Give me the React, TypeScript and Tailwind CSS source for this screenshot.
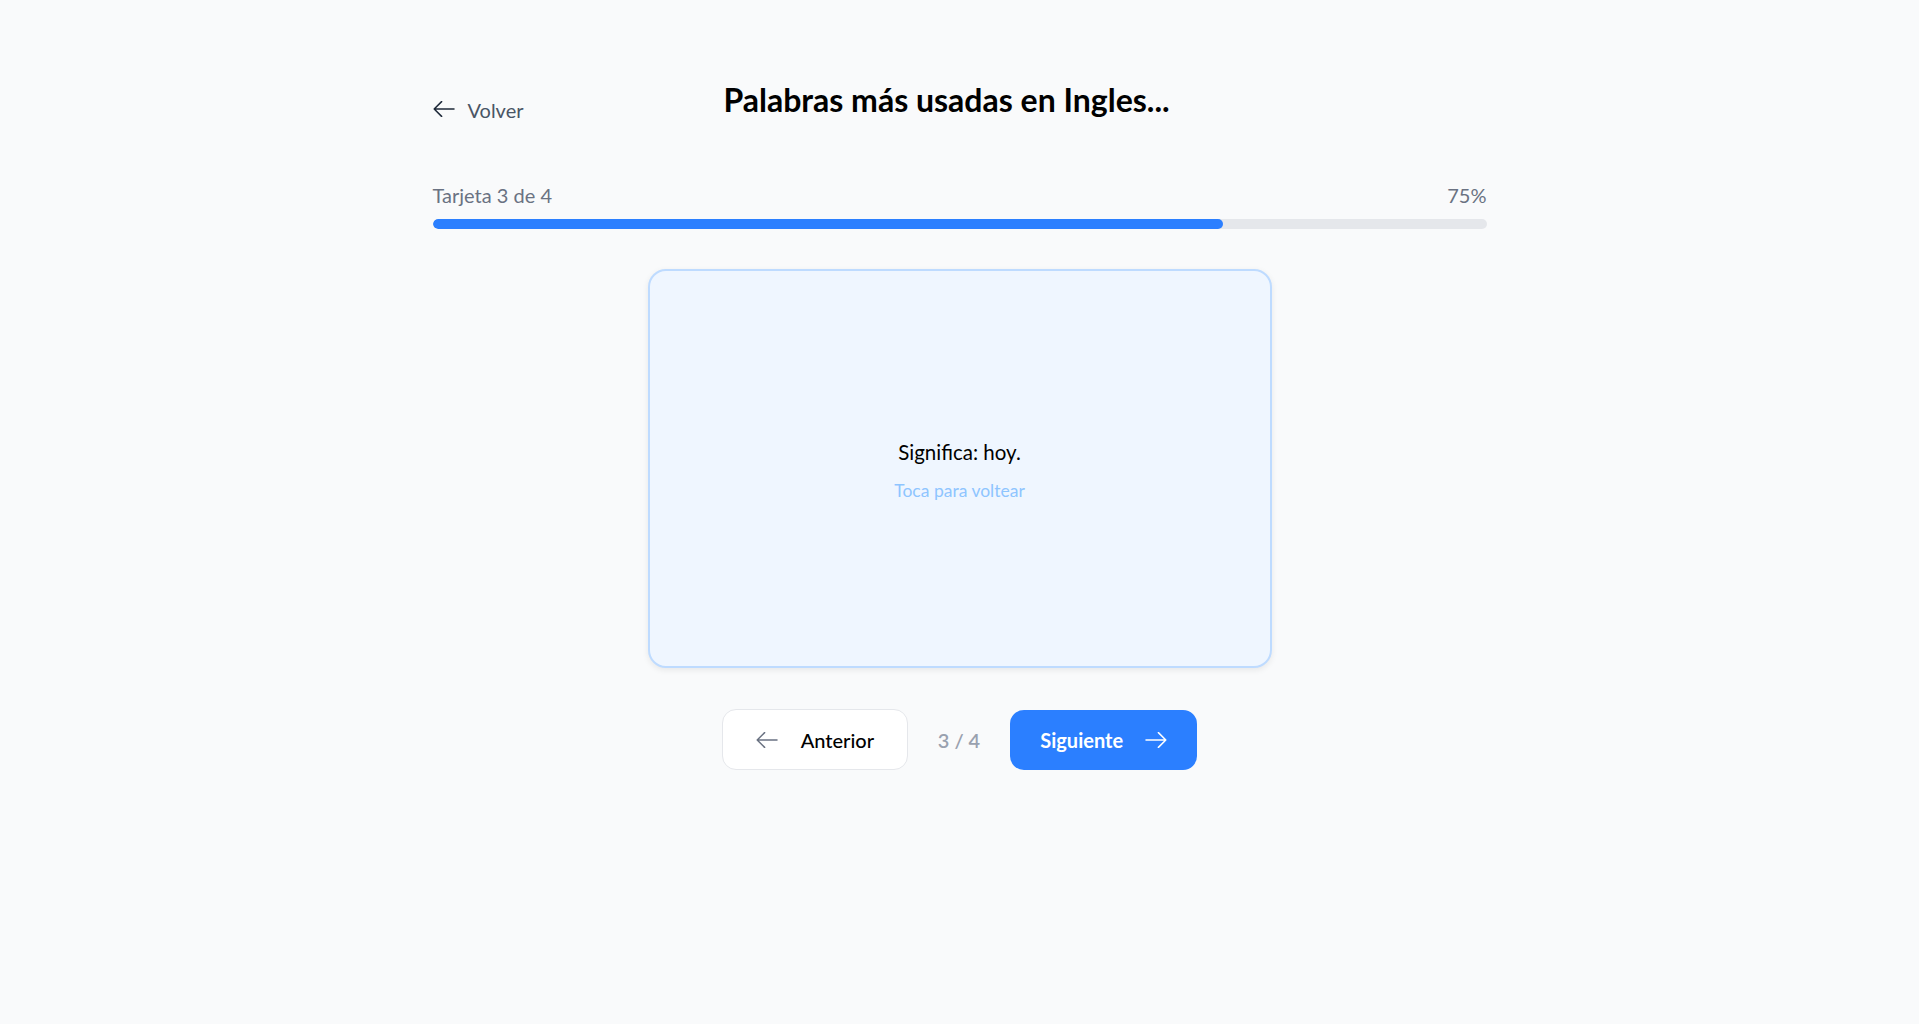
import { useState } from 'react';

function Arrow({ dir = 'left', className = '' }: { dir?: 'left' | 'right'; className?: string }) {
  return (
    <svg
      width="22"
      height="16"
      viewBox="0 0 22 16"
      fill="none"
      stroke="currentColor"
      strokeWidth="1.5"
      strokeLinecap="round"
      strokeLinejoin="round"
      className={className}
      style={dir === 'right' ? { transform: 'scaleX(-1)' } : undefined}
    >
      <path d="M21 8H1.2M8.6 0.6 1.2 8l7.4 7.4" />
    </svg>
  );
}

const cards = [
  { front: 'Today', back: 'Significa: hoy.' },
  { front: 'Time', back: 'Significa: tiempo.' },
  { front: 'Today', back: 'Significa: hoy.' },
  { front: 'Year', back: 'Significa: año.' },
];

export default function App() {
  const [index] = useState(2);
  const total = 4;
  const pct = Math.round(((index + 1) / total) * 100);

  return (
    <div className="min-h-screen bg-[#f9fafb] font-['Lato','Noto_Sans',sans-serif] text-[#101828]">
      <div className="mx-auto w-[1054px] pt-[80px]">
        {/* header */}
        <div className="flex items-start">
          <button className="mt-[16px] flex items-center gap-[13px] text-[20px] leading-[28px] text-[#4a5565]">
            <Arrow className="text-[#1e2939] -mt-[3px]" />
            <span>Volver</span>
          </button>
          <h1 className="flex-1 text-center text-[32px] leading-[40px] font-bold text-black">
            Palabras más usadas en Ingles...
          </h1>
          <div className="w-[117px]" />
        </div>

        {/* progress */}
        <div className="mt-[57px] flex items-center justify-between text-[20px] leading-[28px] text-[#6a7282]">
          <span>Tarjeta {index + 1} de {total}</span>
          <span>{pct}%</span>
        </div>
        <div className="mt-[10px] h-[10px] w-full overflow-hidden rounded-full bg-[#e5e7eb]">
          <div className="h-full rounded-full bg-[#2b7fff]" style={{ width: `${pct}%` }} />
        </div>

        {/* card */}
        <div className="mx-auto mt-[40px] flex h-[399px] w-[624px] cursor-pointer flex-col items-center justify-center rounded-[18px] border-2 border-[#bedbff] bg-[#eff6ff] pt-[4px] shadow-[0_2px_6px_rgba(0,0,0,0.08)]">
          <p className="text-[20.5px] leading-[28px] text-black">{cards[index].back}</p>
          <p className="mt-[12px] text-[17.5px] leading-[25px] text-[#8ec5ff]">Toca para voltear</p>
        </div>

        {/* navigation */}
        <div className="mt-[41px] flex items-center justify-center gap-[30px]">
          <button className="flex h-[61px] w-[186px] items-center justify-center gap-[23px] rounded-[14px] border border-[#e5e7eb] bg-white text-[20px] font-medium text-black">
            <Arrow className="text-[#6a7282]" />
            <span>Anterior</span>
          </button>
          <span className="text-[20px] font-semibold text-[#99a1af]">
            {index + 1} / {total}
          </span>
          <button className="flex h-[60px] w-[187px] items-center justify-center gap-[22px] rounded-[14px] bg-[#2b7fff] text-[20px] font-bold text-white">
            <span>Siguiente</span>
            <Arrow dir="right" className="text-white" />
          </button>
        </div>
      </div>
    </div>
  );
}
